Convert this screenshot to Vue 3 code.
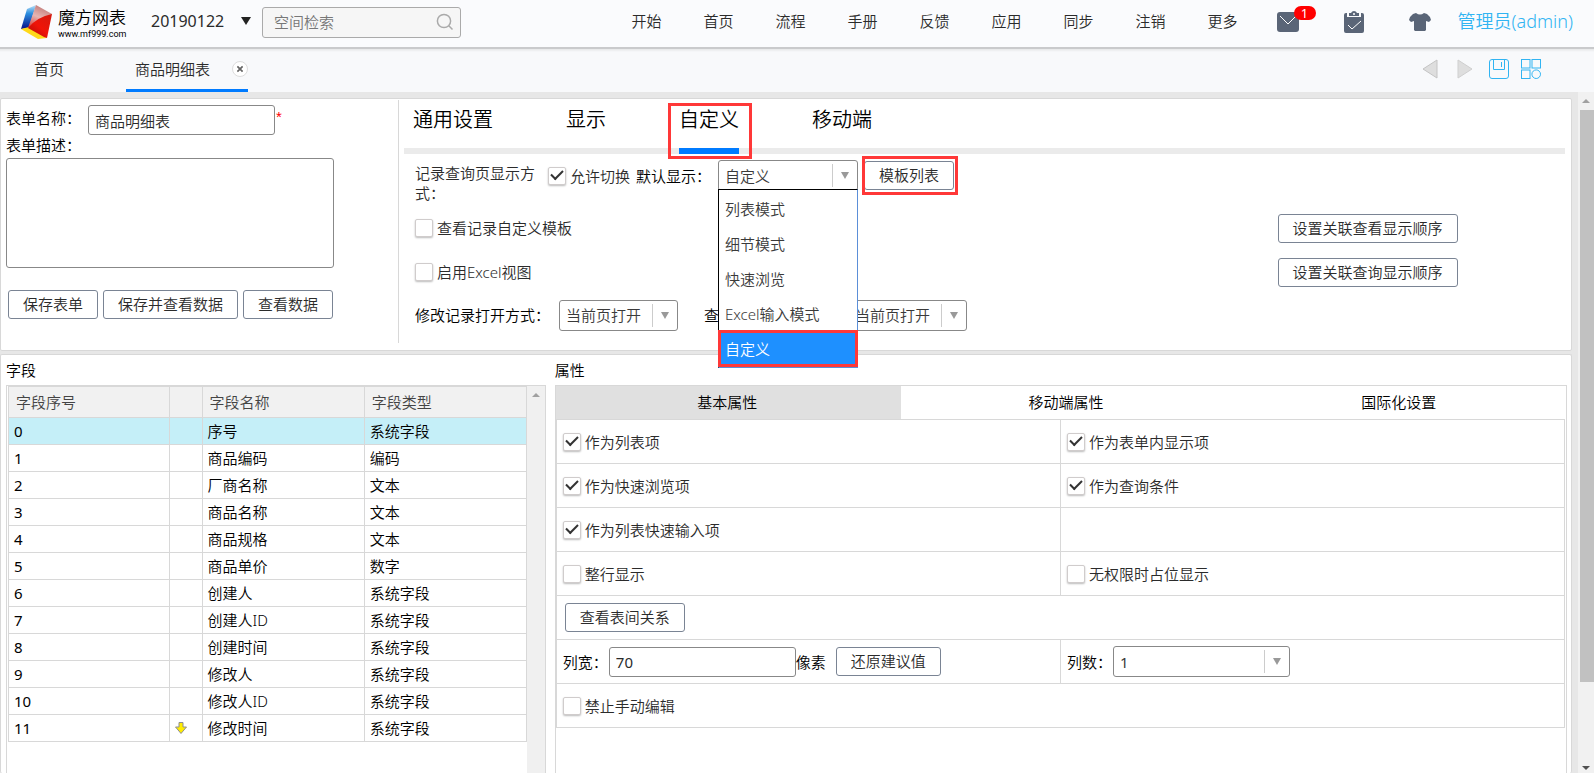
<script setup>
import { ref } from 'vue'

const navItems = ['开始', '首页', '流程', '手册', '反馈', '应用', '同步', '注销', '更多']
const settingTabs = ['通用设置', '显示', '自定义', '移动端']
const activeSetting = ref('自定义')
const displayModes = ['列表模式', '细节模式', '快速浏览', 'Excel输入模式', '自定义']
const displayMode = ref('自定义')
const formName = ref('商品明细表')
const columnWidth = ref('70')

const fields = [
  ['序号', '系统字段'],
  ['商品编码', '编码'],
  ['厂商名称', '文本'],
  ['商品名称', '文本'],
  ['商品规格', '文本'],
  ['商品单价', '数字'],
  ['创建人', '系统字段'],
  ['创建人ID', '系统字段'],
  ['创建时间', '系统字段'],
  ['修改人', '系统字段'],
  ['修改人ID', '系统字段'],
  ['修改时间', '系统字段'],
]
const selectedField = ref(0)

const optionRows = [
  [{ label: '作为列表项', on: true }, { label: '作为表单内显示项', on: true }],
  [{ label: '作为快速浏览项', on: true }, { label: '作为查询条件', on: true }],
  [{ label: '作为列表快速输入项', on: true }, null],
  [{ label: '整行显示', on: false }, { label: '无权限时占位显示', on: false }],
]
</script>

<template>
  <div class="app">
    <header class="topbar">
      <a class="logo" href="#">
        <svg class="cube" viewBox="0 0 34 36" aria-hidden="true">
          <defs>
            <linearGradient id="blue" x1="0" y1="0" x2="0" y2="1">
              <stop offset="0" stop-color="#bfe3f8" /><stop offset=".35" stop-color="#2c8fe0" /><stop offset="1" stop-color="#06108a" />
            </linearGradient>
            <linearGradient id="red" x1="1" y1="0" x2=".2" y2="1">
              <stop offset="0" stop-color="#d11a10" /><stop offset=".6" stop-color="#f01408" /><stop offset="1" stop-color="#b80d08" />
            </linearGradient>
            <linearGradient id="pink" x1=".6" y1="0" x2=".2" y2="1">
              <stop offset="0" stop-color="#c07774" /><stop offset=".5" stop-color="#e6b5b2" /><stop offset="1" stop-color="#d8403a" />
            </linearGradient>
          </defs>
          <path d="M7 5 16 1 9 24 1 25Z" fill="url(#blue)" />
          <path d="M1 25 9 23 27 34 18 35Z" fill="#ffd91a" />
          <path d="M8 24 16 8 32 10 27 34 24 33Z" fill="url(#red)" />
          <path d="M16 1 32 10Q17 13 8 24Z" fill="url(#pink)" />
        </svg>
        <span class="brand">
          <span class="brand-name">魔方网表</span>
          <span class="brand-url">www.mf999.com</span>
        </span>
      </a>
      <button class="space">20190122<span class="caret"></span></button>
      <label class="search">
        <input type="text" placeholder="空间检索" aria-label="空间检索" />
        <svg viewBox="0 0 18 18" aria-hidden="true"><circle cx="8" cy="8" r="6.6" /><path d="M12.800 12.800 16.500 16.500" /></svg>
      </label>
      <nav class="nav">
        <a v-for="item in navItems" :key="item" href="#">{{ item }}</a>
      </nav>
      <div class="tools">
        <button class="tool" aria-label="消息">
          <svg width="22" height="20" viewBox="0 0 22 20"><rect width="22" height="20" rx="3" fill="#5a6577" /><path d="M3 4 11 12 19 4" fill="none" stroke="#fff" /></svg>
          <span class="badge">1</span>
        </button>
        <button class="tool" aria-label="任务">
          <svg width="20" height="22" viewBox="0 0 20 22">
            <path d="M0 4Q0 2 2 2H3V6H17V2H18Q20 2 20 4V20Q20 22 18 22H2Q0 22 0 20Z" fill="#5a6577" />
            <path d="M5 5V2H7Q8 0 10 0T13 2H15V5Z" fill="#5a6577" /><circle cx="10" cy="3" r="1" fill="#fff" />
            <path d="M4 14 8 18 17 10" fill="none" stroke="#fff" />
          </svg>
        </button>
        <button class="tool" aria-label="皮肤">
          <svg width="22" height="18" viewBox="0 0 22 18"><path d="M7 0Q11 3 15 0L18 1Q21 3 22 7L20 9 17 8V17L16 18H6L5 17V8L2 9 0 7Q1 3 4 1Z" fill="#5a6577" /></svg>
        </button>
      </div>
      <a class="user" href="#">管理员(admin)</a>
    </header>

    <div class="pagebar">
      <a class="page-tab" href="#">首页</a>
      <div class="page-tab current">
        <a href="#">商品明细表</a>
        <button class="close" aria-label="关闭"><svg viewBox="0 0 16 16"><path d="M5 5 11 11M11 5 5 11" /></svg></button>
      </div>
      <div class="page-tools">
        <button aria-label="上一页"><svg viewBox="0 0 20 20"><path d="M16 1V19L2 10Z" fill="#dedede" stroke="#c4c4c4" /></svg></button>
        <button aria-label="下一页"><svg viewBox="0 0 20 20"><path d="M3 1V19L17 10Z" fill="#dedede" stroke="#cfcfcf" /></svg></button>
        <button aria-label="保存"><svg viewBox="0 0 20 20" fill="none" stroke="#31b4f2"><rect x=".5" y=".5" width="19" height="19" rx="2.500" /><path d="M4.500 1V10.500H15.500V1M12.500 3V8" /></svg></button>
        <button aria-label="布局"><svg viewBox="0 0 20 20" fill="none" stroke="#31b4f2"><rect x=".5" y=".5" width="8.500" height="8.500" /><rect x="11" y=".5" width="8.500" height="8.500" /><rect x=".5" y="11" width="8.500" height="8.500" /><circle cx="15.200" cy="15.200" r="4.300" /></svg></button>
      </div>
    </div>

    <div class="body">
      <main class="content">
        <section class="panel form-panel">
          <form class="form-side" @submit.prevent>
            <div class="name-row">
              <label for="form-name">表单名称：</label>
              <input id="form-name" v-model="formName" class="text" type="text" /><span class="required">*</span>
            </div>
            <label class="desc-label" for="form-desc">表单描述：</label>
            <textarea id="form-desc"></textarea>
            <div class="form-actions">
              <button class="btn">保存表单</button>
              <button class="btn">保存并查看数据</button>
              <button class="btn">查看数据</button>
            </div>
          </form>

          <div class="settings">
            <div class="setting-tabs" role="tablist">
              <button
                v-for="tab in settingTabs"
                :key="tab"
                role="tab"
                :aria-selected="tab === activeSetting"
                :class="{ active: tab === activeSetting }"
                @click="activeSetting = tab"
              >
                {{ tab }}<span v-if="tab === '自定义'" class="callout"></span>
              </button>
            </div>

            <div class="row mode-row">
              <span class="row-label">记录查询页显示方式：</span>
              <div class="mode-controls">
                <label class="check"><input type="checkbox" checked /><span>允许切换</span></label>
                <label class="default-label" for="mode">默认显示：</label>
                <div class="select mode-select">
                  <select id="mode" v-model="displayMode">
                    <option v-for="mode in displayModes" :key="mode">{{ mode }}</option>
                  </select>
                  <ul class="menu" role="listbox" aria-label="默认显示">
                    <li
                      v-for="mode in displayModes"
                      :key="mode"
                      role="option"
                      :aria-selected="mode === displayMode"
                      :class="{ chosen: mode === displayMode }"
                      @click="displayMode = mode"
                    >{{ mode }}</li>
                  </ul>
                </div>
                <button class="btn template">模板列表<span class="callout"></span></button>
              </div>
            </div>
            <div class="row split">
              <label class="check"><input type="checkbox" /><span>查看记录自定义模板</span></label>
              <button class="btn">设置关联查看显示顺序</button>
            </div>
            <div class="row split">
              <label class="check"><input type="checkbox" /><span>启用Excel视图</span></label>
              <button class="btn">设置关联查询显示顺序</button>
            </div>
            <div class="row open-row">
              <label for="edit-open">修改记录打开方式：</label>
              <div class="select open-select"><select id="edit-open"><option>当前页打开</option></select></div>
              <label for="view-open">查</label>
              <div class="select open-select"><select id="view-open"><option>当前页打开</option></select></div>
            </div>
          </div>
        </section>

        <section class="panel field-panel">
          <div class="column">
            <h2>字段</h2>
            <div class="box list-box">
              <div class="list">
                <table class="fields">
                  <colgroup><col class="c-no" /><col class="c-mark" /><col class="c-name" /><col class="c-type" /></colgroup>
                  <thead>
                    <tr><th>字段序号</th><th></th><th>字段名称</th><th>字段类型</th></tr>
                  </thead>
                  <tbody>
                    <tr v-for="(field, i) in fields" :key="i" :class="{ selected: i === selectedField }" @click="selectedField = i">
                      <td class="number">{{ i }}</td>
                      <td>
                        <svg v-if="i === fields.length - 1" class="down" viewBox="0 0 12 12"><path d="M4 .5H8V5H11.500L6 11.500.5 5H4Z" fill="#ffec00" stroke="#8f8f8f" /></svg>
                      </td>
                      <td>{{ field[0] }}</td>
                      <td>{{ field[1] }}</td>
                    </tr>
                  </tbody>
                </table>
              </div>
              <div class="inner-scroll"><span class="up"></span></div>
            </div>
          </div>

          <div class="column">
            <h2>属性</h2>
            <div class="box">
              <div class="prop-tabs" role="tablist">
                <button role="tab" aria-selected="true" class="active">基本属性</button>
                <button role="tab">移动端属性</button>
                <button role="tab">国际化设置</button>
              </div>
              <table class="props">
                <tbody>
                  <tr v-for="(cells, r) in optionRows" :key="r">
                    <td v-for="(cell, c) in cells" :key="c">
                      <label v-if="cell" class="check"><input type="checkbox" :checked="cell.on" /><span>{{ cell.label }}</span></label>
                    </td>
                  </tr>
                  <tr>
                    <td colspan="2"><button class="btn relation">查看表间关系</button></td>
                  </tr>
                  <tr>
                    <td>
                      <div class="inline">
                        <label for="col-width">列宽：</label>
                        <input id="col-width" v-model="columnWidth" class="text number" type="text" />
                        <span>像素</span>
                        <button class="btn restore">还原建议值</button>
                      </div>
                    </td>
                    <td>
                      <div class="inline">
                        <label for="col-count">列数：</label>
                        <div class="select count-select"><select id="col-count" class="number"><option>1</option></select></div>
                      </div>
                    </td>
                  </tr>
                  <tr>
                    <td colspan="2"><label class="check"><input type="checkbox" /><span>禁止手动编辑</span></label></td>
                  </tr>
                </tbody>
              </table>
            </div>
          </div>
        </section>
      </main>
      <div class="scrollbar" aria-hidden="true">
        <span class="up"></span>
        <span class="thumb"></span>
        <span class="down-arrow"></span>
      </div>
    </div>
  </div>
</template>

<style>
html,
body {
  margin: 0;
  overflow: hidden;
}
</style>

<style scoped>
.app {
  display: flex;
  flex-direction: column;
  height: 100vh;
  overflow: hidden;
  background: #e7e7e7;
  color: #000;
  font: 350 15px/20px 'Noto Sans', 'Noto Sans CJK SC', sans-serif;
}
.app *,
.app *::before,
.app *::after {
  box-sizing: border-box;
}
a {
  color: inherit;
  text-decoration: none;
}
button,
input,
select,
textarea {
  margin: 0;
  font: inherit;
  color: #2b2b2b;
}
button {
  padding: 0;
  border: 0;
  background: none;
  white-space: nowrap;
}
svg {
  display: block;
}

/* top bar */
.topbar {
  flex: none;
  display: flex;
  align-items: center;
  height: 47px;
  padding: 0 21px 6px 20px;
  background: #fafbfd;
  color: #2b2b2b;
  white-space: nowrap;
}
.logo {
  display: flex;
  align-items: center;
  gap: 4px;
  width: 131px;
  padding-top: 2px;
}
.cube {
  width: 34px;
  height: 36px;
}
.brand {
  display: flex;
  flex-direction: column;
  padding-top: 3px;
}
.brand-name {
  color: #000;
  font-size: 17px;
  line-height: 21px;
}
.brand-url {
  color: #000;
  font-family: Roboto, sans-serif;
  font-size: 9px;
  font-weight: 400;
  line-height: 12px;
}
.space {
  display: flex;
  align-items: center;
  justify-content: space-between;
  width: 100px;
  font-size: 16px;
  font-weight: 400;
}
.caret {
  border: 5px solid transparent;
  border-top: 8px solid #222;
  border-bottom: 0;
}
.search {
  display: flex;
  align-items: center;
  width: 199px;
  height: 31px;
  margin: 4px 0 0 11px;
  padding: 0 6px 2px 11px;
  border: 1px solid #aaa;
  border-radius: 3px;
  background: #f6f6f6;
}
.search input {
  flex: 1;
  min-width: 0;
  padding: 0;
  border: 0;
  background: none;
}
.search input::placeholder {
  color: #777;
}
.search svg {
  width: 18px;
  height: 18px;
  fill: none;
  stroke: #aaa;
  stroke-width: 1.5;
}
.nav {
  display: flex;
  gap: 42px;
  margin-left: auto;
}
.tools {
  display: flex;
  align-items: center;
  gap: 45px;
  margin: 2px 27px 0 39px;
}
.tool {
  position: relative;
}
.badge {
  position: absolute;
  top: -6px;
  left: 17px;
  width: 22px;
  border-radius: 7px;
  background: #f00;
  color: #fff;
  font-size: 13px;
  font-weight: 400;
  line-height: 14px;
}
.user {
  color: #31b4f2;
  font-size: 18px;
}

/* open pages */
.pagebar {
  flex: none;
  display: flex;
  height: 45px;
  padding-left: 34px;
  border-top: 2px solid #c9cacc;
  background: linear-gradient(#e6e7e8, #f8f9fb 3px);
  color: #2b2b2b;
}
.page-tab {
  display: flex;
  align-items: center;
  height: 43px;
  padding-bottom: 4px;
}
.page-tab.current {
  gap: 22px;
  margin-left: 62px;
  padding: 0 0 1px 9px;
  border-bottom: 3px solid #007bff;
}
.close svg {
  width: 16px;
  height: 16px;
  border: 1px solid #ddd;
  border-radius: 50%;
  background: #fff;
  fill: none;
  stroke: #666;
  stroke-width: 2;
}
.page-tools {
  display: flex;
  align-items: center;
  gap: 12px;
  margin: 0 53px 4px auto;
}
.page-tools svg {
  width: 20px;
  height: 20px;
}
.page-tools button:first-child,
.page-tools button:nth-child(2) {
  margin-right: 2px;
}

/* body */
.body {
  flex: 1;
  display: flex;
  min-height: 0;
}
.content {
  flex: 1;
  display: flex;
  flex-direction: column;
  gap: 3px;
  min-width: 0;
  padding: 6px 6px 0 0;
}
.panel {
  border: 1px solid #d8d8d8;
  border-radius: 2px;
  background: #fff;
}
.scrollbar {
  flex: none;
  display: flex;
  flex-direction: column;
  width: 16px;
  background: #f1f1f1;
}
.scrollbar .up,
.inner-scroll .up {
  align-self: center;
  margin: 7px 0;
  border: 4px solid transparent;
  border-top: 0;
  border-bottom-color: #a0a0a0;
}
.scrollbar .thumb {
  height: 84%;
  margin-left: 2px;
  background: #c1c1c1;
}
.scrollbar .down-arrow {
  align-self: center;
  margin: auto 0 3px;
  border: 4px solid transparent;
  border-top-color: #505050;
  border-bottom: 0;
}

/* shared controls */
.btn {
  position: relative;
  height: 29px;
  padding: 0 14px;
  border: 1px solid #7a8494;
  border-radius: 3px;
  background: #fff;
  line-height: 27px;
}
.text {
  width: 187px;
  height: 30px;
  padding: 0 6px;
  border: 1px solid #888;
  border-radius: 3px;
  background: #fff;
}
.check {
  display: flex;
  align-items: center;
  gap: 4px;
  color: #2b2b2b;
  white-space: nowrap;
}
.check input {
  display: grid;
  place-items: center;
  flex: none;
  width: 18px;
  height: 18px;
  appearance: none;
  border: 1px solid #d0cccc;
  border-radius: 2px;
  background: #fff;
  box-shadow: 0 1px 2px #bbb;
}
.check input:checked::before {
  content: '';
  width: 12px;
  height: 7px;
  margin-bottom: 4px;
  border: solid #333;
  border-width: 0 0 2px 2px;
  transform: rotate(-45deg);
}
.select {
  position: relative;
  height: 31px;
}
.select select {
  width: 100%;
  height: 100%;
  padding: 0 26px 0 6px;
  appearance: none;
  border: 1px solid #888;
  border-radius: 3px;
  background: #fff;
  color: #3a3a3a;
}
.select::before {
  content: '';
  position: absolute;
  top: 4px;
  right: 25px;
  bottom: 4px;
  border-left: 1px solid #ccc;
}
.select::after {
  content: '';
  position: absolute;
  top: 12px;
  right: 9px;
  border: 4px solid transparent;
  border-top: 7px solid #999;
  border-bottom: 0;
}
.number {
  font-weight: 400;
}
.callout {
  position: absolute;
  border: 3px solid #ff3838;
  pointer-events: none;
}

/* form panel */
.form-panel {
  display: flex;
  height: 253px;
}
.form-side {
  flex: none;
  display: flex;
  flex-direction: column;
  width: 398px;
  margin: 1px 0 7px;
  padding: 5px 0 0 5px;
  border-right: 1px solid #d8d8d8;
}
.name-row {
  display: flex;
  height: 30px;
}
.name-row label {
  width: 82px;
  padding-top: 3px;
}
.required {
  padding: 2px 0 0 1px;
  color: #f00;
  font-family: 'Liberation Sans', sans-serif;
}
.desc-label {
  margin-bottom: 3px;
}
textarea {
  width: 328px;
  height: 110px;
  border: 1px solid #888;
  border-radius: 3px;
  resize: none;
}
.form-actions {
  display: flex;
  gap: 5px;
  margin: 22px 0 0 2px;
}
.settings {
  flex: 1;
  min-width: 0;
  padding: 0 6px 0 5px;
}
.setting-tabs {
  display: flex;
  gap: 73px;
  height: 55px;
  padding-left: 9px;
  box-shadow: inset 0 -6px #ebebeb;
}
.setting-tabs button {
  position: relative;
  padding-bottom: 7px;
  border-bottom: 6px solid transparent;
  color: #000;
  font-size: 20px;
}
.setting-tabs .active {
  border-bottom-color: #007bff;
}
.setting-tabs .callout {
  inset: 4px -13px -11px -11px;
}
.row {
  display: flex;
  align-items: center;
  height: 44px;
  padding-left: 11px;
}
.mode-row {
  align-items: flex-start;
  height: 52px;
  padding-top: 6px;
}
.row-label {
  width: 124px;
  margin-right: 9px;
  padding-top: 3px;
  color: #2b2b2b;
}
.mode-controls {
  display: flex;
  align-items: center;
}
.default-label {
  width: 88px;
  padding-left: 6px;
}
.mode-select {
  width: 140px;
  margin-right: 6px;
}
.template .callout {
  inset: -6px -5px -6px -3px;
}
.menu {
  position: absolute;
  z-index: 2;
  top: 29px;
  left: 0;
  right: 0;
  margin: 0;
  padding: 0;
  border: 1px solid #5b8fd8;
  border-top: 1px solid #000;
  border-left-color: #000;
  background: #fff;
  color: #3a3a3a;
  list-style: none;
}
.menu li {
  height: 35px;
  padding-left: 6px;
  line-height: 38px;
}
.menu .chosen {
  height: 37px;
  margin: 0 -1px;
  padding-left: 4px;
  border: 3px solid #ff3838;
  background: #1e90ff;
  color: #fff;
  line-height: 32px;
}
.split {
  display: grid;
  grid-template-columns: 3fr 1fr;
  justify-items: start;
}
.open-row {
  height: 42px;
}
.open-row label {
  width: 144px;
  white-space: nowrap;
}
.open-select {
  width: 119px;
  margin-right: 26px;
}

/* field panel */
.field-panel {
  flex: 1;
  display: grid;
  grid-template-columns: minmax(0, 8fr) minmax(0, 15fr);
  gap: 9px;
  min-height: 0;
  padding: 5px 4px 0 5px;
  border-bottom: 0;
}
.column {
  display: flex;
  flex-direction: column;
  min-height: 0;
}
h2 {
  margin: 0 0 5px;
  font: inherit;
}
.box {
  flex: 1;
  min-height: 0;
  overflow: hidden;
  border: 1px solid #d8d8d8;
  border-bottom: 0;
}
.list-box {
  display: flex;
}
.list {
  flex: 1;
  min-width: 0;
  padding-left: 1px;
}
.inner-scroll {
  flex: none;
  display: flex;
  flex-direction: column;
  width: 18px;
  background: #f0f0f0;
}
table {
  width: 100%;
  table-layout: fixed;
  border-collapse: collapse;
}
td,
th {
  border: 1px solid #d8d8d8;
  text-align: left;
}
th {
  font-weight: inherit;
}
.c-no {
  width: 31%;
}
.c-mark {
  width: 33px;
}
.fields th {
  height: 31px;
  padding: 0 0 0 7px;
  background: #f1f1f1;
  color: #444;
}
.fields td {
  height: 27px;
  padding: 0 0 0 5px;
}
.fields .selected {
  background: #c5eff8;
}
.down {
  width: 12px;
  height: 12px;
}
.prop-tabs {
  display: grid;
  grid-template-columns: 345fr 333fr 333fr;
  height: 33px;
}
.prop-tabs button {
  padding: 0 2px 2px 0;
  color: #000;
}
.prop-tabs .active {
  background: #e0e0e0;
}
.props {
  width: auto;
  min-width: calc(100% - 1px);
}
.props td {
  width: 50%;
  height: 44px;
  padding: 0 6px;
}
.relation {
  margin-left: 2px;
}
.inline {
  display: flex;
  align-items: center;
}
.inline label {
  width: 46px;
}
.restore {
  margin-left: 10px;
}
.count-select {
  width: 177px;
}
</style>
